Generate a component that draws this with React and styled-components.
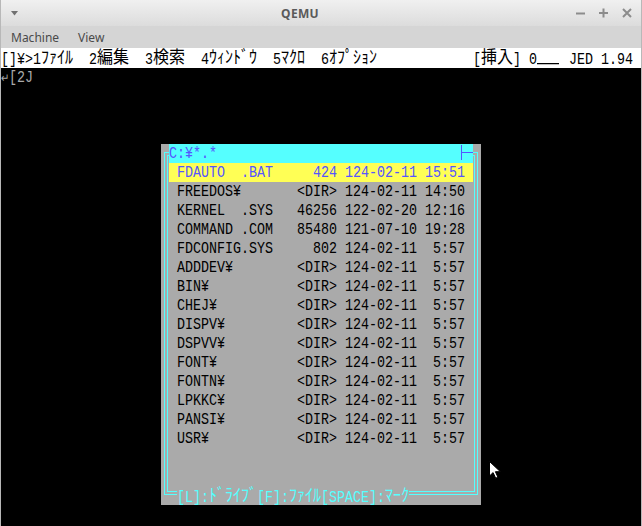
import React from 'react';
import styled, { createGlobalStyle } from 'styled-components';

const GlobalStyle = createGlobalStyle`
  html, body {
    margin: 0;
    padding: 0;
    background: #000;
  }
  body {
    width: 642px;
    height: 526px;
    overflow: hidden;
  }
`;

const DOS_FONT = `'Liberation Mono', 'Noto Sans CJK JP', monospace`;
const GRAY = '#aaaaaa';
const CYAN = '#55ffff';
const YELLOW = '#ffff55';
const BLUE = '#5555ff';

const Window = styled.div`
  width: 642px;
  height: 526px;
  display: flex;
  flex-direction: column;
  overflow: hidden;
  background: #d5d5d5;
  border-left: 1px solid #b8b8b8;
  border-right: 1px solid #b8b8b8;
  box-sizing: border-box;
`;

const TitleBar = styled.div`
  height: 26px;
  display: flex;
  align-items: center;
  background: linear-gradient(#f0f0f0, #dcdcdc);
`;

const TitleSide = styled.div`
  width: ${(p) => p.$w}px;
  height: 100%;
  display: flex;
  align-items: center;
  justify-content: ${(p) => (p.$end ? 'flex-end' : 'flex-start')};
  gap: 13px;
  padding: ${(p) => (p.$end ? '0 9px 0 0' : '0 0 0 10px')};
  box-sizing: border-box;
`;

const Title = styled.div`
  flex: 1;
  text-align: center;
  font-family: 'Noto Sans', sans-serif;
  font-weight: 700;
  font-size: 12px;
  color: #5a5a5a;
  letter-spacing: 0.3px;
`;

const MenuBar = styled.div`
  height: 22px;
  display: flex;
  align-items: center;
  gap: 19px;
  padding-left: 10px;
  font-family: 'Noto Sans', sans-serif;
  font-size: 12px;
  color: #4a4a4a;
`;

const Screen = styled.div`
  position: relative;
  flex: 1;
  background: #000;
  font-family: ${DOS_FONT};
  font-size: 13.333px;
  white-space: pre;
`;

// one text-mode row: 19px high, glyphs centred
const Row = styled.div`
  height: ${(p) => p.$h || 19}px;
  display: flex;
  align-items: center;
  background: ${(p) => p.$bg || 'transparent'};
  color: ${(p) => p.$color || GRAY};
`;

const Glyphs = styled.span`
  display: inline-block;
  line-height: 14px;
  transform: scaleY(1.25);
`;

const Wide = styled.span`
  display: inline-block;
  font-family: 'Noto Sans CJK JP', sans-serif;
  font-size: 16px;
  transform: scaleY(0.88);
`;

const Arrow = styled.span`
  display: inline-block;
  width: 8px;
  font-family: 'DejaVu Sans', sans-serif;
  font-size: 10px;
`;

const Blanks = styled.span`
  display: inline-block;
  width: ${(p) => p.$n * 8 - 2}px;
  height: 0;
  margin-right: 2px;
  border-bottom: 1px solid currentColor;
  vertical-align: baseline;
`;

const Shell = styled.div`
  width: 320px;
  height: 361px;
  margin: 57px 0 0 160px;
  padding: 8px 0 0 3px;
  box-sizing: border-box;
  background: ${GRAY};
`;

const Frame = styled.div`
  width: 314px;
  height: 343px;
  box-sizing: border-box;
  border: 1px solid ${CYAN};
  padding: 2px;
  display: flex;
`;

const FrameInner = styled.div`
  flex: 1;
  border: 1px solid ${CYAN};
  display: flex;
  flex-direction: column;
`;

const TitleRow = styled(Row)`
  margin: -12px 1px 0;
  justify-content: space-between;
`;

const FileList = styled.div`
  margin: 0 1px;
`;

const Footer = styled(Row)`
  align-self: flex-start;
  margin: auto 0 -14px 9px;
`;

const Cursor = styled.svg`
  position: absolute;
  left: 487px;
  top: 412px;
`;

const CJK = /([\u3000-\u9fff\uff00-\uffef]+|\u21b5|_+)/;

function dos(text) {
  return text.split(CJK).map((part, i) => {
    if (!part) return null;
    if (part === '\u21b5') return <Arrow key={i}>{part}</Arrow>;
    if (part[0] === '_') return <Blanks key={i} $n={part.length} />;
    if (CJK.test(part)) return <Wide key={i}>{part}</Wide>;
    return <React.Fragment key={i}>{part}</React.Fragment>;
  });
}

const files = [
  ['FDAUTO  .BAT', '424', '124-02-11', '15:51'],
  ['FREEDOS¥', '<DIR>', '124-02-11', '14:50'],
  ['KERNEL  .SYS', '46256', '122-02-20', '12:16'],
  ['COMMAND .COM', '85480', '121-07-10', '19:28'],
  ['FDCONFIG.SYS', '802', '124-02-11', '5:57'],
  ['ADDDEV¥', '<DIR>', '124-02-11', '5:57'],
  ['BIN¥', '<DIR>', '124-02-11', '5:57'],
  ['CHEJ¥', '<DIR>', '124-02-11', '5:57'],
  ['DISPV¥', '<DIR>', '124-02-11', '5:57'],
  ['DSPVV¥', '<DIR>', '124-02-11', '5:57'],
  ['FONT¥', '<DIR>', '124-02-11', '5:57'],
  ['FONTN¥', '<DIR>', '124-02-11', '5:57'],
  ['LPKKC¥', '<DIR>', '124-02-11', '5:57'],
  ['PANSI¥', '<DIR>', '124-02-11', '5:57'],
  ['USR¥', '<DIR>', '124-02-11', '5:57'],
];

const fileLine = ([name, size, date, time]) =>
  ' ' + name.padEnd(12) + size.padStart(8) + ' ' + date + ' ' + time.padStart(5) + ' ';

const statusText =
  '[]¥>1ﾌｧｲﾙ  2編集  3検索  4ｳｨﾝﾄﾞｳ  5ﾏｸﾛ  6ｵﾌﾟｼｮﾝ' +
  ' '.repeat(12) +
  '[挿入] 0___ JED 1.94';

const MenuTriangle = () => (
  <svg width="7" height="5" viewBox="0 0 7 5">
    <path d="M0 0h7L3.5 4.5z" fill="#707070" />
  </svg>
);

const WinButtons = () => (
  <>
    <svg width="10" height="10" viewBox="0 0 10 10">
      <path d="M0 5.5h9" stroke="#8c8c8c" strokeWidth="2" />
    </svg>
    <svg width="10" height="10" viewBox="0 0 10 10">
      <path d="M0 5h9M4.5 0.5v9" stroke="#8c8c8c" strokeWidth="2" />
    </svg>
    <svg width="10" height="10" viewBox="0 0 10 10">
      <path d="M1 1l8 8M9 1l-8 8" stroke="#8c8c8c" strokeWidth="2" />
    </svg>
  </>
);

const TitleTick = () => (
  <svg width="16" height="19" viewBox="0 0 16 19">
    <path d="M4.5 1v15M5 8.5h11" stroke={BLUE} strokeWidth="1" />
  </svg>
);

export default function App() {
  return (
    <>
      <GlobalStyle />
      <Window>
        <TitleBar>
          <TitleSide $w={30}>
            <MenuTriangle />
          </TitleSide>
          <Title>QEMU</Title>
          <TitleSide $w={72} $end>
            <WinButtons />
          </TitleSide>
        </TitleBar>
        <MenuBar>
          <span>Machine</span>
          <span>View</span>
        </MenuBar>
        <Screen>
          <Row $h={20} $bg="#fff" $color="#000">
            <Glyphs>{dos(statusText)}</Glyphs>
          </Row>
          <Row>
            <Glyphs>{dos('\u21b5[2J')}</Glyphs>
          </Row>
          <Shell>
            <Frame>
              <FrameInner>
                <TitleRow $bg={CYAN} $color={BLUE}>
                  <Glyphs>C:¥*.*</Glyphs>
                  <TitleTick />
                </TitleRow>
                <FileList>
                  {files.map((f, i) => (
                    <Row
                      key={f[0]}
                      $bg={i === 0 ? YELLOW : undefined}
                      $color={i === 0 ? BLUE : '#000'}
                    >
                      <Glyphs>{fileLine(f)}</Glyphs>
                    </Row>
                  ))}
                </FileList>
                <Footer $bg={GRAY} $color={CYAN}>
                  <Glyphs>{dos('[L]:ﾄﾞﾗｲﾌﾞ[F]:ﾌｧｲﾙ[SPACE]:ﾏｰｸ')}</Glyphs>
                </Footer>
              </FrameInner>
            </Frame>
          </Shell>
          <Cursor width="13" height="20" viewBox="0 0 13 20">
            <path
              d="M1.5 1.5v14.5l3.6-3.4 2.6 5.6 2.2-1-2.5-5.5h5z"
              fill="#fff"
              stroke="#000"
              strokeWidth="1"
              strokeLinejoin="round"
            />
          </Cursor>
        </Screen>
      </Window>
    </>
  );
}
